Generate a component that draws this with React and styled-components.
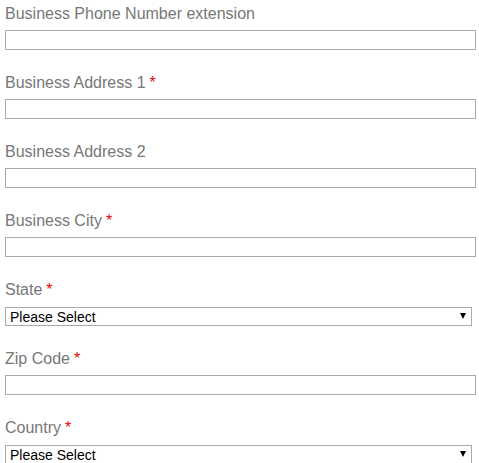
import React from 'react';
import styled, { createGlobalStyle } from 'styled-components';

const GlobalStyle = createGlobalStyle`
	body {
		margin: 0;
		background: #fff;
		font-family: 'Liberation Sans', Arial, sans-serif;
	}
`;

const Form = styled.form`
	width: 479px;
	padding: 5px 4px 0 5px;
	box-sizing: border-box;
`;

const Field = styled.div`
	display: flex;
	flex-direction: column;
	margin-bottom: 24px;
`;

const Label = styled.label`
	font-size: 16px;
	line-height: 18px;
	color: #777;
	margin-bottom: 7px;
`;

const Required = styled.span`
	color: #e00;
	margin-left: 4px;
`;

const TextInput = styled.input`
	width: 471px;
	height: 20px;
	box-sizing: border-box;
	border: 1px solid #aaa;
	margin: 0;
	padding: 0 4px;
	font: 14px 'Liberation Sans', Arial, sans-serif;
`;

const SelectWrap = styled.div`
	position: relative;
	width: 467px;
	height: 20px;
	padding-top: 1px;
	box-sizing: border-box;
`;

const Select = styled.select`
	appearance: none;
	width: 100%;
	height: 19px;
	box-sizing: border-box;
	border: 1px solid #aaa;
	border-radius: 0;
	background: #fff;
	margin: 0;
	padding: 0 0 0 4px;
	font: 14px 'Liberation Sans', Arial, sans-serif;
	color: #000;
`;

const Arrow = styled.span`
	position: absolute;
	right: 6px;
	top: 7px;
	width: 0;
	height: 0;
	border-left: 3.5px solid transparent;
	border-right: 3.5px solid transparent;
	border-top: 6px solid #000;
	pointer-events: none;
`;

const fields = [
	{ label: 'Business Phone Number extension' },
	{ label: 'Business Address 1', required: true },
	{ label: 'Business Address 2' },
	{ label: 'Business City', required: true },
	{ label: 'State', required: true, select: true },
	{ label: 'Zip Code', required: true },
	{ label: 'Country', required: true, select: true },
];

const App = () => {
	return (
		<>
			<GlobalStyle />
			<Form>
				{fields.map((f) => (
					<Field key={f.label}>
						<Label>
							{f.label}
							{f.required && <Required>*</Required>}
						</Label>
						{f.select ? (
							<SelectWrap>
								<Select defaultValue=''>
									<option value=''>Please Select</option>
								</Select>
								<Arrow />
							</SelectWrap>
						) : (
							<TextInput type='text' />
						)}
					</Field>
				))}
			</Form>
		</>
	);
};

export default App;
